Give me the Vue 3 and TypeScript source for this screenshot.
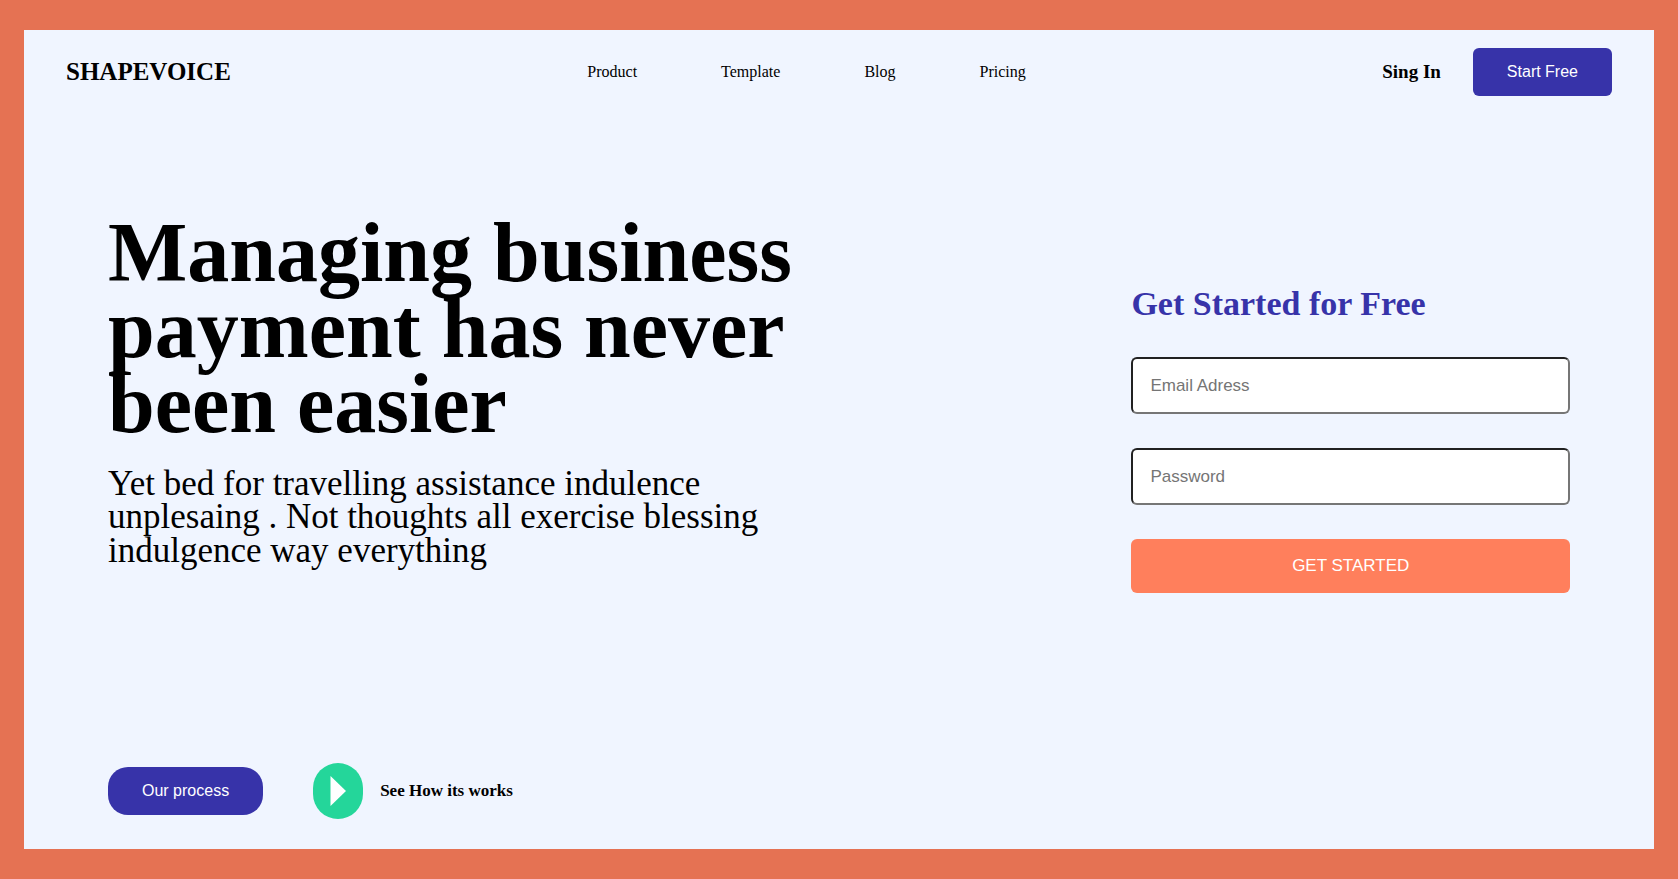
<script setup lang="ts">
import { ref } from 'vue'

interface NavItem {
  label: string
  href: string
}

const navItems: NavItem[] = [
  { label: 'Product', href: '#product' },
  { label: 'Template', href: '#template' },
  { label: 'Blog', href: '#blog' },
  { label: 'Pricing', href: '#pricing' },
]

const email = ref('')
const password = ref('')
</script>

<template>
  <div class="page">
    <div class="panel">
      <header class="topbar">
        <div class="logo">SHAPEVOICE</div>
        <nav class="nav">
          <a v-for="item in navItems" :key="item.label" :href="item.href">{{ item.label }}</a>
        </nav>
        <div class="account">
          <a class="sign-in" href="#sign-in">Sing In</a>
          <button class="btn" type="button">Start Free</button>
        </div>
      </header>

      <main class="hero">
        <section class="intro">
          <h1>Managing business payment has never been easier</h1>
          <p>
            Yet bed for travelling assistance indulence unplesaing . Not thoughts all exercise
            blessing indulgence way everything
          </p>
        </section>

        <form class="signup" @submit.prevent>
          <h2>Get Started for Free</h2>
          <input v-model="email" type="email" placeholder="Email Adress" aria-label="Email Adress" />
          <input v-model="password" type="password" placeholder="Password" aria-label="Password" />
          <button class="submit" type="submit">GET STARTED</button>
        </form>
      </main>

      <footer class="actions">
        <button class="btn pill" type="button">Our process</button>
        <div class="watch">
          <button class="play" type="button" aria-labelledby="watch-label">
            <svg width="16" height="30" viewBox="0 0 16 30" aria-hidden="true">
              <path d="M0.5 0 L16 15 L0.5 30 Z" fill="#fff" />
            </svg>
          </button>
          <span id="watch-label" class="watch-label">See How its works</span>
        </div>
      </footer>
    </div>
  </div>
</template>

<style>
body {
  margin: 0;
}
</style>

<style scoped>
.page {
  box-sizing: border-box;
  display: flex;
  min-height: 100vh;
  padding: 30px 24px;
  background: #e57253;
  color: #000;
  font-family: "Liberation Serif", "Times New Roman", serif;
}

.panel {
  flex: 1;
  display: flex;
  flex-direction: column;
  background: #f0f5ff;
}

.topbar {
  display: flex;
  justify-content: space-between;
  align-items: center;
  padding: 18px 42px;
}

.logo {
  font-size: 25px;
  font-weight: bold;
}

.nav {
  display: flex;
  gap: 84px;
  font-size: 16px;
}

.nav a,
.sign-in {
  color: inherit;
  text-decoration: none;
}

.account {
  display: flex;
  align-items: center;
  gap: 32px;
}

.sign-in {
  font-size: 19px;
  font-weight: bold;
}

.btn {
  height: 48px;
  padding: 0 34px;
  border: 0;
  border-radius: 6px;
  background: #3733a9;
  color: #fff;
  font-family: "Liberation Sans", Arial, sans-serif;
  font-size: 16px;
}

.hero {
  display: flex;
  justify-content: space-between;
  align-items: flex-start;
  padding: 101px 84px 42px;
}

.intro {
  width: 48%;
}

.intro h1 {
  margin: 0 0 25px;
  font-size: 84px;
  line-height: 0.9;
}

.intro p {
  margin: 0;
  font-size: 35px;
  line-height: 0.96;
}

.signup {
  display: flex;
  flex-direction: column;
  gap: 34px;
  width: 30%;
  margin-top: 70px;
}

.signup h2 {
  margin: 0;
  color: #3733a9;
  font-size: 34px;
  line-height: 38px;
}

.signup input {
  box-sizing: border-box;
  height: 57px;
  padding: 0 17px;
  border: 2px solid;
  border-color: #212121 #767676 #767676 #212121;
  border-radius: 6px;
  background: #fff;
  font-family: "Liberation Sans", Arial, sans-serif;
  font-size: 17px;
}

.signup input::placeholder {
  color: #757575;
}

.submit {
  height: 54px;
  border: 0;
  border-radius: 6px;
  background: #ff7f5c;
  color: #fff;
  font-family: "Liberation Sans", Arial, sans-serif;
  font-size: 17px;
}

.actions {
  display: flex;
  align-items: center;
  gap: 50px;
  margin-top: auto;
  padding: 0 84px 30px;
}

.pill {
  border-radius: 20px;
}

.watch {
  display: flex;
  align-items: center;
  gap: 17px;
}

.play {
  display: flex;
  align-items: center;
  justify-content: center;
  width: 50px;
  height: 56px;
  padding: 0;
  border: 0;
  border-radius: 25px;
  background: #24d69a;
}

.watch-label {
  font-size: 17px;
  font-weight: bold;
}
</style>
